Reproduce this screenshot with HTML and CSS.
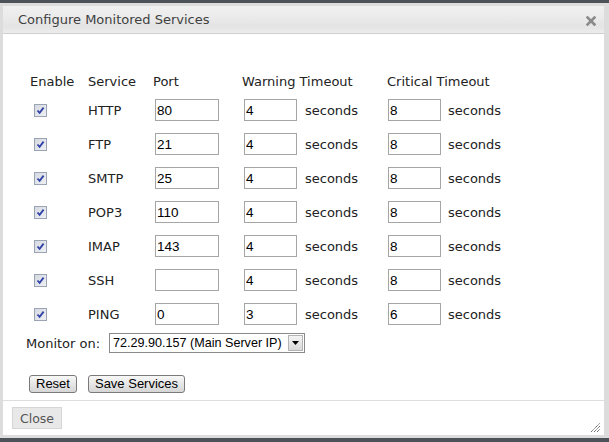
FILE: index.html
```html
<!DOCTYPE html>
<html>
<head>
<meta charset="utf-8">
<link rel="stylesheet" href="styles.css">
</head>
<body>
<div class="dialog">
  <div class="titlebar">
    <span class="title">Configure Monitored Services</span>
    <svg class="close-x" width="10" height="10" viewBox="0 0 10 10"><path d="M1.5 1.5 L8.5 8.5 M8.5 1.5 L1.5 8.5" stroke="#8a8a8a" stroke-width="2.6" stroke-linecap="square"/></svg>
  </div>
  <div class="content">
    <div class="grid">
      <div class="h">Enable</div>
      <div class="h">Service</div>
      <div class="h">Port</div>
      <div class="h span2">Warning Timeout</div>
      <div class="h span2">Critical Timeout</div>

      <div><span class="cb"><svg width="9" height="9" viewBox="0 0 9 9"><path d="M1.5 4.5 L3.6 6.8 L7.6 1.6" fill="none" stroke="#2f42a8" stroke-width="1.8"/></svg></span></div>
      <div>HTTP</div>
      <div><input class="port" value="80"></div>
      <div><input class="to" value="4"></div>
      <div>seconds</div>
      <div><input class="to crit" value="8"></div>
      <div>seconds</div>

      <div><span class="cb"><svg width="9" height="9" viewBox="0 0 9 9"><path d="M1.5 4.5 L3.6 6.8 L7.6 1.6" fill="none" stroke="#2f42a8" stroke-width="1.8"/></svg></span></div>
      <div>FTP</div>
      <div><input class="port" value="21"></div>
      <div><input class="to" value="4"></div>
      <div>seconds</div>
      <div><input class="to crit" value="8"></div>
      <div>seconds</div>

      <div><span class="cb"><svg width="9" height="9" viewBox="0 0 9 9"><path d="M1.5 4.5 L3.6 6.8 L7.6 1.6" fill="none" stroke="#2f42a8" stroke-width="1.8"/></svg></span></div>
      <div>SMTP</div>
      <div><input class="port" value="25"></div>
      <div><input class="to" value="4"></div>
      <div>seconds</div>
      <div><input class="to crit" value="8"></div>
      <div>seconds</div>

      <div><span class="cb"><svg width="9" height="9" viewBox="0 0 9 9"><path d="M1.5 4.5 L3.6 6.8 L7.6 1.6" fill="none" stroke="#2f42a8" stroke-width="1.8"/></svg></span></div>
      <div>POP3</div>
      <div><input class="port" value="110"></div>
      <div><input class="to" value="4"></div>
      <div>seconds</div>
      <div><input class="to crit" value="8"></div>
      <div>seconds</div>

      <div><span class="cb"><svg width="9" height="9" viewBox="0 0 9 9"><path d="M1.5 4.5 L3.6 6.8 L7.6 1.6" fill="none" stroke="#2f42a8" stroke-width="1.8"/></svg></span></div>
      <div>IMAP</div>
      <div><input class="port" value="143"></div>
      <div><input class="to" value="4"></div>
      <div>seconds</div>
      <div><input class="to crit" value="8"></div>
      <div>seconds</div>

      <div><span class="cb"><svg width="9" height="9" viewBox="0 0 9 9"><path d="M1.5 4.5 L3.6 6.8 L7.6 1.6" fill="none" stroke="#2f42a8" stroke-width="1.8"/></svg></span></div>
      <div>SSH</div>
      <div><input class="port" value=""></div>
      <div><input class="to" value="4"></div>
      <div>seconds</div>
      <div><input class="to crit" value="8"></div>
      <div>seconds</div>

      <div><span class="cb"><svg width="9" height="9" viewBox="0 0 9 9"><path d="M1.5 4.5 L3.6 6.8 L7.6 1.6" fill="none" stroke="#2f42a8" stroke-width="1.8"/></svg></span></div>
      <div>PING</div>
      <div><input class="port" value="0"></div>
      <div><input class="to" value="3"></div>
      <div>seconds</div>
      <div><input class="to crit" value="6"></div>
      <div>seconds</div>
    </div>

    <div class="monitor">
      <span class="mlabel">Monitor on:</span>
      <div class="select">
        <span class="sval">72.29.90.157 (Main Server IP)</span>
        <span class="sarrow"><svg width="7" height="4" viewBox="0 0 7 4"><path d="M0 0 H7 L3.5 4 Z" fill="#000"/></svg></span>
      </div>
    </div>

    <div class="actions">
      <button class="btn">Reset</button>
      <button class="btn">Save Services</button>
    </div>
  </div>
  <div class="footer">
    <button class="close-btn">Close</button>
  </div>
  <svg class="resize" width="11" height="11" viewBox="0 0 11 11">
    <path d="M1 10 L10 1 M4 10 L10 4 M7 10 L10 7" stroke="#555" stroke-width="1" stroke-dasharray="1.2 0.6"/>
  </svg>
</div>
</body>
</html>
```
FILE: styles.css
```css
html, body {
  margin: 0;
  padding: 0;
}
body {
  background: #4c5257;
  width: 609px;
  height: 442px;
  overflow: hidden;
  font-family: "DejaVu Sans", Verdana, sans-serif;
  font-size: 13px;
  color: #222;
}
.dialog {
  position: relative;
  margin-top: 3px;
  width: 609px;
  box-sizing: border-box;
  border: 3px solid #dcdcdc;
  border-right-width: 5px;
  background: #fff;
}
.titlebar {
  height: 27px;
  display: flex;
  align-items: center;
  justify-content: space-between;
  padding: 0 8px 0 15px;
  background: linear-gradient(#f0f0f0, #ebebeb 40%, #e4e4e4 75%, #ececec);
  border-bottom: 1px solid #cfcfcf;
}
.title {
  color: #3f3f3f;
  font-size: 13px;
}
.close-x {
  display: block;
  margin-top: 2px;
}
.content {
  height: 366px;
  box-sizing: border-box;
  padding: 35px 0 0 23px;
}
.grid {
  display: grid;
  margin-left: 4px;
  grid-template-columns: 58px 65px 89px 63px 82px 61px 1fr;
  grid-template-rows: 24px repeat(7, 34px);
  align-items: center;
}
.h {
  color: #222;
}
.span2 {
  grid-column: span 2;
}
.cb {
  display: flex;
  align-items: center;
  justify-content: center;
  width: 11px;
  height: 11px;
  margin-left: 4px;
  border: 1px solid #9aa4b4;
  background: linear-gradient(135deg, #d6d9e0, #eef0f3);
}
input {
  display: block;
  box-sizing: border-box;
  height: 22px;
  margin: 0 0 0 2px;
  padding: 0 0 0 1px;
  border: 1px solid #a5a5a5;
  font-family: "Liberation Sans", Arial, sans-serif;
  font-size: 13.5px;
  color: #000;
  background: #fff;
  outline: none;
}
input.port {
  width: 64px;
}
input.to {
  width: 53px;
}
input.crit {
  margin-left: 1px;
}
.monitor {
  display: flex;
  align-items: center;
  margin-top: 2px;
  height: 20px;
}
.mlabel {
  width: 83px;
}
.select {
  display: flex;
  align-items: center;
  justify-content: space-between;
  box-sizing: border-box;
  width: 196px;
  height: 20px;
  border: 1px solid #8a8a8a;
  padding: 0 1px 0 3px;
  font-family: "Liberation Sans", Arial, sans-serif;
  font-size: 12.6px;
  color: #000;
}
.sarrow {
  display: flex;
  align-items: center;
  justify-content: center;
  width: 13px;
  height: 14px;
  border: 1px solid #b4b4b4;
  background: linear-gradient(#f4f4f4, #d8d8d8);
}
.actions {
  display: flex;
  gap: 11px;
  margin: 22px 0 0 3px;
}
.btn {
  height: 18px;
  padding: 0 6px;
  border: 1px solid #7a7a7a;
  border-radius: 3px;
  background: linear-gradient(#f8f8f8, #e6e6e6 50%, #d6d6d6);
  font-family: "Liberation Sans", Arial, sans-serif;
  font-size: 13px;
  color: #000;
  line-height: 16px;
}
.footer {
  height: 35px;
  box-sizing: border-box;
  border-top: 1px solid #dedede;
  padding: 6px 0 0 9px;
}
.close-btn {
  width: 50px;
  height: 22px;
  border: 1px solid #d6d6d6;
  background: #e8e8e8;
  font-family: "DejaVu Sans", Verdana, sans-serif;
  font-size: 12.5px;
  color: #555;
  padding: 0;
}
.resize {
  position: absolute;
  right: 3px;
  bottom: 2px;
}
```
